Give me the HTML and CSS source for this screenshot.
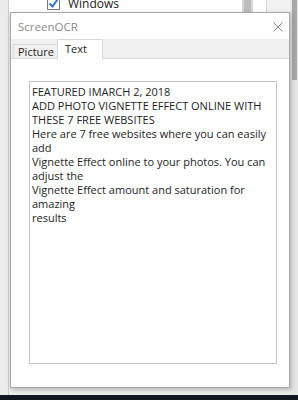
FILE: index.html
```html
<!doctype html>
<html>
  <head>
    <title>ScreenOCR</title>
    <link rel="stylesheet" href="styles.css">
  </head>
  <body>
    <div class="desk">
      <div class="app">
        <div class="app-side"></div>
        <div class="app-main">
          <div class="app-head">
            <div class="option">
              <span class="check">
                <svg width="11" height="11" viewBox="0 0 11 11"><path d="M1.5 5.5 L4.5 8.5 L9.5 1.5" fill="none" stroke="#2a6fd6" stroke-width="1.8"/></svg>
              </span>
              <span>Windows</span>
            </div>
            <div class="app-bar"></div>
            <div class="app-gap"></div>
            <div class="app-rest"></div>
          </div>
        </div>
        <div class="app-scroll"><div class="thumb"></div></div>
      </div>
      <div class="taskbar"></div>

      <div class="dialog">
        <div class="titlebar">
          <span class="title">ScreenOCR</span>
          <svg class="close" width="10" height="10" viewBox="0 0 10 10"><path d="M0.5 0.5 L9.5 9.5 M9.5 0.5 L0.5 9.5" stroke="#8a8a8a" stroke-width="1"/></svg>
        </div>
        <div class="tabs">
          <div class="tab-strip">
            <a class="tab">Picture</a>
            <a class="tab active">Text</a>
          </div>
          <div class="tab-page">
            <div class="result">FEATURED IMARCH 2, 2018<br>ADD PHOTO VIGNETTE EFFECT ONLINE WITH<br>THESE 7 FREE WEBSITES<br>Here are 7 free websites where you can easily<br>add<br>Vignette Effect online to your photos. You can<br>adjust the<br>Vignette Effect amount and saturation for<br>amazing<br>results</div>
          </div>
        </div>
      </div>
    </div>
  </body>
</html>
```

FILE: styles.css
```css
html, body {
  margin: 0;
  padding: 0;
}
body {
  font-family: "Open Sans", "Noto Sans", sans-serif;
  font-size: 11px;
  color: #1e1e1e;
}
.desk {
  position: relative;
  width: 298px;
  height: 400px;
  overflow: hidden;
  display: flex;
  flex-direction: column;
  background: #f0f0f0;
}
.app {
  flex: 1;
  display: flex;
}
.app-side {
  width: 8px;
  background: #ececec;
  border-right: 1px solid #d0d0d0;
}
.app-main {
  flex: 1;
  background: #f0f0f0;
}
.app-head {
  height: 12px;
  display: flex;
  background: #fff;
}
.option {
  width: 233px;
  box-sizing: border-box;
  display: flex;
  align-items: center;
  gap: 8px;
  padding-left: 38px;
  margin-top: -5px;
  height: 17px;
  font-size: 12px;
  color: #222;
}
.check {
  width: 13px;
  height: 13px;
  box-sizing: border-box;
  border: 1px solid #7a7a7a;
  background: #fff;
  display: flex;
  align-items: center;
  justify-content: center;
}
.app-bar {
  width: 11px;
  background: #bdbdbd;
  border-left: 2px solid #d6d6d6;
  border-right: 2px solid #d6d6d6;
  box-sizing: border-box;
}
.app-gap {
  width: 13px;
  background: #fff;
  border-right: 1px solid #d8d8d8;
}
.app-rest {
  flex: 1;
  background: #f2f2f2;
}
.app-scroll {
  width: 8px;
  background: #e6e6e6;
  padding-left: 2px;
  box-sizing: border-box;
}
.thumb {
  width: 5px;
  height: 80px;
  background: #a8a8a8;
}
.taskbar {
  height: 5px;
  background: #111821;
}

/* the OCR window sits on top of the app behind it */
.dialog {
  position: absolute;
  left: 10px;
  top: 12px;
  width: 280px;
  height: 376px;
  box-sizing: border-box;
  background: #fff;
  border: 1px solid #a9a9a9;
  box-shadow: 1px 2px 5px rgba(0,0,0,0.25);
  display: flex;
  flex-direction: column;
}
.titlebar {
  height: 25px;
  display: flex;
  align-items: center;
  justify-content: space-between;
  padding: 1px 6px 0 7px;
}
.title {
  font-size: 11.5px;
  color: #8c8c8c;
}
.close {
  margin-top: 1px;
}
.tabs {
  flex: 1;
  display: flex;
  flex-direction: column;
}
.tab-strip {
  height: 19px;
  background: #f0f0f0;
  display: flex;
  align-items: flex-end;
  padding-left: 2px;
}
.tab {
  box-sizing: border-box;
  border: 1px solid #d9d9d9;
  border-bottom: none;
  line-height: 13px;
}
.tab:first-child {
  height: 14px;
  padding: 0 3px 0 4px;
  background: #f0f0f0;
  border-right: none;
}
.tab.active {
  height: 20px;
  width: 46px;
  padding: 2px 0 0 7px;
  background: #fff;
  margin-bottom: -1px;
  position: relative;
}
.tab-page {
  flex: 1;
  border-top: 1px solid #d9d9d9;
  padding: 22px 12px 23px 18px;
  display: flex;
}
.result {
  flex: 1;
  border: 1px solid #c4c4c4;
  padding: 3px 2px;
  line-height: 14px;
  white-space: nowrap;
  overflow: hidden;
}
```
